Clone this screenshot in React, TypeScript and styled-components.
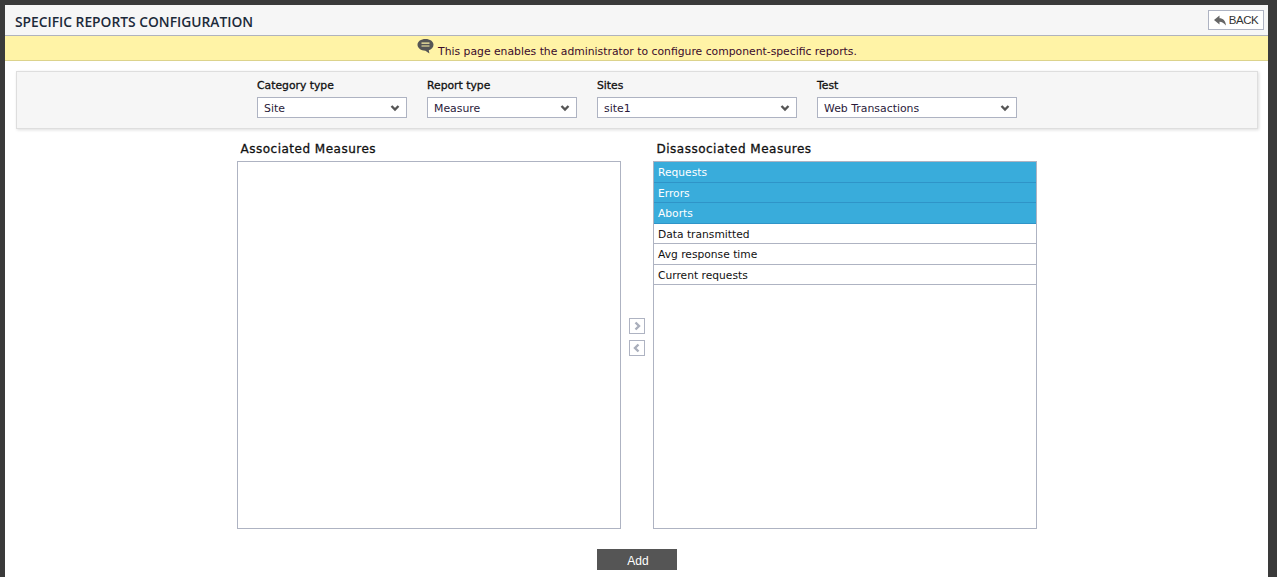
import styled, { createGlobalStyle } from "styled-components";

const GlobalStyle = createGlobalStyle`
  html, body {
    margin: 0;
    padding: 0;
    height: 100%;
    overflow: hidden;
    background: #3a3a3a;
  }
  body {
    font-family: "DejaVu Sans", Verdana, sans-serif;
    font-size: 11px;
    color: #111;
  }
`;

const Page = styled.div`
  margin: 5px 9px 0 5px;
  height: 572px;
  background: #fff;
  overflow: hidden;
`;

const Header = styled.div`
  height: 30px;
  display: flex;
  align-items: center;
  justify-content: space-between;
  padding: 0 4px 0 10px;
  background: #f6f6f6;
  border-bottom: 1px solid #b0b3bd;
`;

const Title = styled.h1`
  margin: 2px 0 0;
  font-family: "Open Sans", "DejaVu Sans", sans-serif;
  font-size: 13.8px;
  font-weight: 600;
  color: #1c2a3a;
`;

const BackButton = styled.button`
  width: 56px;
  height: 20px;
  display: flex;
  align-items: center;
  justify-content: center;
  gap: 3px;
  padding: 0;
  background: #fff;
  border: 1px solid #aeb3c2;
  font-family: "Liberation Sans", sans-serif;
  font-size: 11.5px;
  letter-spacing: -0.4px;
  color: #333;
`;

const Banner = styled.div`
  height: 24px;
  display: flex;
  align-items: center;
  justify-content: center;
  gap: 4px;
  padding-left: 1px;
  background: #fff3a6;
  border-bottom: 1px solid #dcd38c;
  color: #3a0a2a;
`;

const BannerText = styled.span`
  font-size: 10.8px;
  margin-top: 6px;
`;

const BannerIcon = styled.svg`
  width: 17px;
  height: 18px;
  margin-bottom: 2px;
`;

const FilterPanel = styled.div`
  margin: 10px 10px 0 11px;
  height: 58px;
  display: flex;
  justify-content: center;
  gap: 20px;
  box-sizing: border-box;
  background: #f6f6f6;
  border: 1px solid #dedede;
  box-shadow: 1px 1px 3px #ddd;
`;

const Field = styled.div`
  margin-top: 7px;
  display: flex;
  flex-direction: column;
  gap: 4px;
`;

const FieldLabel = styled.label`
  font-size: 10.8px;
  line-height: 14px;
  color: #111;
  -webkit-text-stroke: 0.3px #111;
`;

const SelectBox = styled.div<{ $width: number }>`
  width: ${({ $width }) => $width}px;
  height: 21px;
  box-sizing: border-box;
  display: flex;
  align-items: center;
  justify-content: space-between;
  padding: 1px 6px 0;
  background: #fff;
  border: 1px solid #aeb3c2;
  font-size: 10.9px;
  color: #2a1a3a;
`;

const Columns = styled.div`
  margin-top: 10px;
  display: flex;
  justify-content: center;
`;

const Column = styled.div`
  width: 384px;
`;

const ColumnTitle = styled.div`
  height: 22px;
  padding-left: 4px;
  font-size: 12px;
  line-height: 20px;
  letter-spacing: 0.5px;
  color: #111;
  -webkit-text-stroke: 0.3px #111;
`;

const ListBox = styled.div`
  height: 368px;
  box-sizing: border-box;
  background: #fff;
  border: 1px solid #aeb3c2;
`;

const ListItem = styled.div<{ $selected?: boolean }>`
  height: 20.5px;
  box-sizing: border-box;
  padding: 1px 0 0 4.5px;
  font-size: 10.7px;
  line-height: 20px;
  background: ${({ $selected }) => ($selected ? "#39acdb" : "#fff")};
  color: ${({ $selected }) => ($selected ? "#fff" : "#111")};
  border-bottom: 1px solid ${({ $selected }) => ($selected ? "#2f94c8" : "#aeb3c2")};
`;

const Mover = styled.div`
  width: 32px;
  padding-top: 179px;
  display: flex;
  flex-direction: column;
  align-items: center;
  gap: 6px;
`;

const MoveButton = styled.div`
  width: 16px;
  height: 16px;
  box-sizing: border-box;
  display: flex;
  align-items: center;
  justify-content: center;
  border: 1px solid #aeb3c2;
  background: #fff;
`;

const Footer = styled.div`
  margin-top: 20px;
  display: flex;
  justify-content: center;
`;

const AddButton = styled.button`
  width: 80px;
  height: 21px;
  padding: 2px 0 0 2px;
  margin-left: 1px;
  background: #555;
  border: 0;
  color: #fff;
  font-family: "Liberation Sans", sans-serif;
  font-size: 12px;
`;

const Chevron = ({ size = 10, dir = "down" }: { size?: number; dir?: "down" | "left" | "right" }) => {
  const d = {
    down: "M1.5 3 L5 6.5 L8.5 3",
    left: "M6.5 1.5 L3 5 L6.5 8.5",
    right: "M3.5 1.5 L7 5 L3.5 8.5",
  }[dir];
  const color = dir === "down" ? "#555" : "#a9aebb";
  return (
    <svg width={size} height={size} viewBox="0 0 10 10">
      <path d={d} fill="none" stroke={color} strokeWidth="2.4" />
    </svg>
  );
};

const filters = [
  { label: "Category type", value: "Site", width: 150 },
  { label: "Report type", value: "Measure", width: 150 },
  { label: "Sites", value: "site1", width: 200 },
  { label: "Test", value: "Web Transactions", width: 200 },
];

const measures = [
  { name: "Requests", selected: true },
  { name: "Errors", selected: true },
  { name: "Aborts", selected: true },
  { name: "Data transmitted" },
  { name: "Avg response time" },
  { name: "Current requests" },
];

const App = () => {
  return (
    <Page>
      <GlobalStyle />
      <Header>
        <Title>SPECIFIC REPORTS CONFIGURATION</Title>
        <BackButton>
          <svg width="12" height="11" viewBox="0 0 12 10">
            <path d="M0 4.5 L5.5 0 V2.8 C9 2.8 11.5 5 12 10 C10 7.5 8 6.2 5.5 6.2 V9 Z" fill="#666" />
          </svg>
          BACK
        </BackButton>
      </Header>
      <Banner>
        <BannerIcon viewBox="0 0 17 18">
          <path d="M8.5 1 C13 1 16.5 3.4 16.5 6.8 C16.5 9.6 14.2 11.6 11.8 12.3 L12.4 15.6 L8.4 12.7 C4 12.7 0.5 10.2 0.5 6.8 C0.5 3.4 4 1 8.5 1 Z" fill="#555" />
          <path d="M4.5 5.2 H12.5 M4.5 8 H12.5" stroke="#fff3a6" strokeWidth="1.2" />
        </BannerIcon>
        <BannerText>This page enables the administrator to configure component-specific reports.</BannerText>
      </Banner>
      <FilterPanel>
        {filters.map((f) => (
          <Field key={f.label}>
            <FieldLabel>{f.label}</FieldLabel>
            <SelectBox $width={f.width}>
              {f.value}
              <Chevron />
            </SelectBox>
          </Field>
        ))}
      </FilterPanel>
      <Columns>
        <Column>
          <ColumnTitle>Associated Measures</ColumnTitle>
          <ListBox />
        </Column>
        <Mover>
          <MoveButton>
            <Chevron dir="right" />
          </MoveButton>
          <MoveButton>
            <Chevron dir="left" />
          </MoveButton>
        </Mover>
        <Column>
          <ColumnTitle>Disassociated Measures</ColumnTitle>
          <ListBox>
            {measures.map((m) => (
              <ListItem key={m.name} $selected={m.selected}>
                {m.name}
              </ListItem>
            ))}
          </ListBox>
        </Column>
      </Columns>
      <Footer>
        <AddButton>Add</AddButton>
      </Footer>
    </Page>
  );
};

export default App;
